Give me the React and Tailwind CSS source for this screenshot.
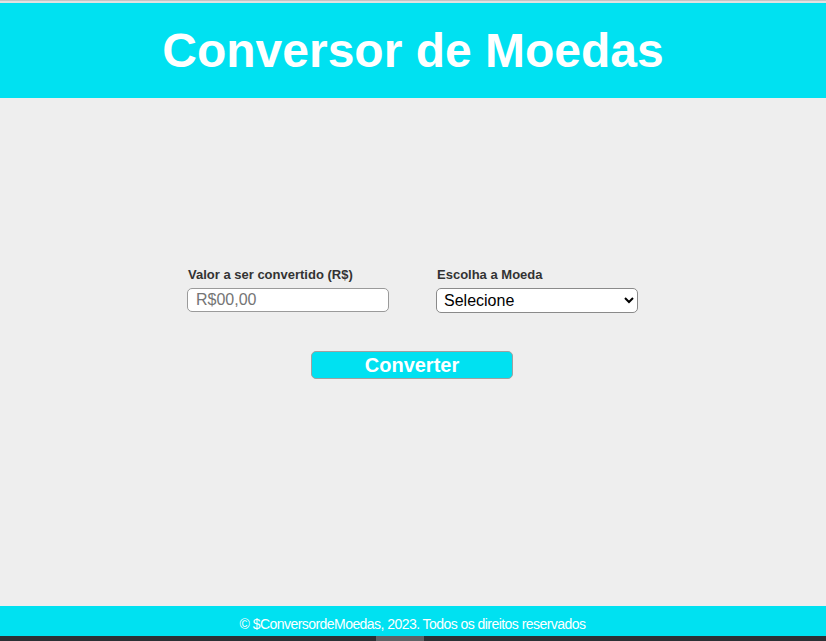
export default function App() {
    return (
        <div className="h-[641px] flex flex-col bg-[#eeeeee] overflow-hidden" style={{ fontFamily: '"Liberation Sans", Arial, sans-serif' }}>
            {/* top edge */}
            <div className="h-[3px] bg-[#e2e2e2] border-t border-[#c4c4c4]" />

            {/* Header */}
            <header className="h-[95px] bg-[#00e1f1] flex items-center justify-center">
                <h1 className="text-[48px] font-bold text-white leading-none mt-[1px]">Conversor de Moedas</h1>
            </header>

            {/* Form */}
            <main className="flex-1 flex flex-col items-center pt-[169px]">
                <div className="flex gap-[47px] ml-[-1px]">
                    <div className="flex flex-col w-[202px]">
                        <label className="text-[13px] font-bold text-[#333] pl-[1px] mb-[5px] leading-[16px]">Valor a ser convertido (R$)</label>
                        <input
                            type="text"
                            placeholder="R$00,00"
                            className="h-[24px] rounded-[5px] border border-[#9a9a9a] bg-white px-[8px] text-[16px] text-black placeholder:text-[#757575] outline-none"
                        />
                    </div>
                    <div className="flex flex-col w-[202px]">
                        <label className="text-[13px] font-bold text-[#333] pl-[1px] mb-[5px] leading-[16px]">Escolha a Moeda</label>
                        <select className="h-[25px] rounded-[5px] border border-[#8a8a8a] bg-white pl-[3px] pr-[4px] text-[16px] text-black outline-none">
                            <option>Selecione</option>
                            <option>Dólar</option>
                            <option>Euro</option>
                        </select>
                    </div>
                </div>
                <button className="mt-[38px] ml-[-2px] w-[202px] h-[28px] rounded-[5px] border border-[#a0a0a0] bg-[#00e1f1] text-white text-[20px] font-bold leading-none">
                    Converter
                </button>
            </main>

            {/* Footer */}
            <footer className="h-[30px] bg-[#00e1f1] flex items-end justify-center pb-[1px]">
                <p className="text-[14px] text-white tracking-[-0.55px] ml-[-1px]">© $ConversordeMoedas, 2023. Todos os direitos reservados</p>
            </footer>
            <div className="h-[5px] bg-[#2b3034] flex pl-[376px]">
                <div className="w-[48px] bg-[#5e6265]" />
            </div>
        </div>
    );
}
